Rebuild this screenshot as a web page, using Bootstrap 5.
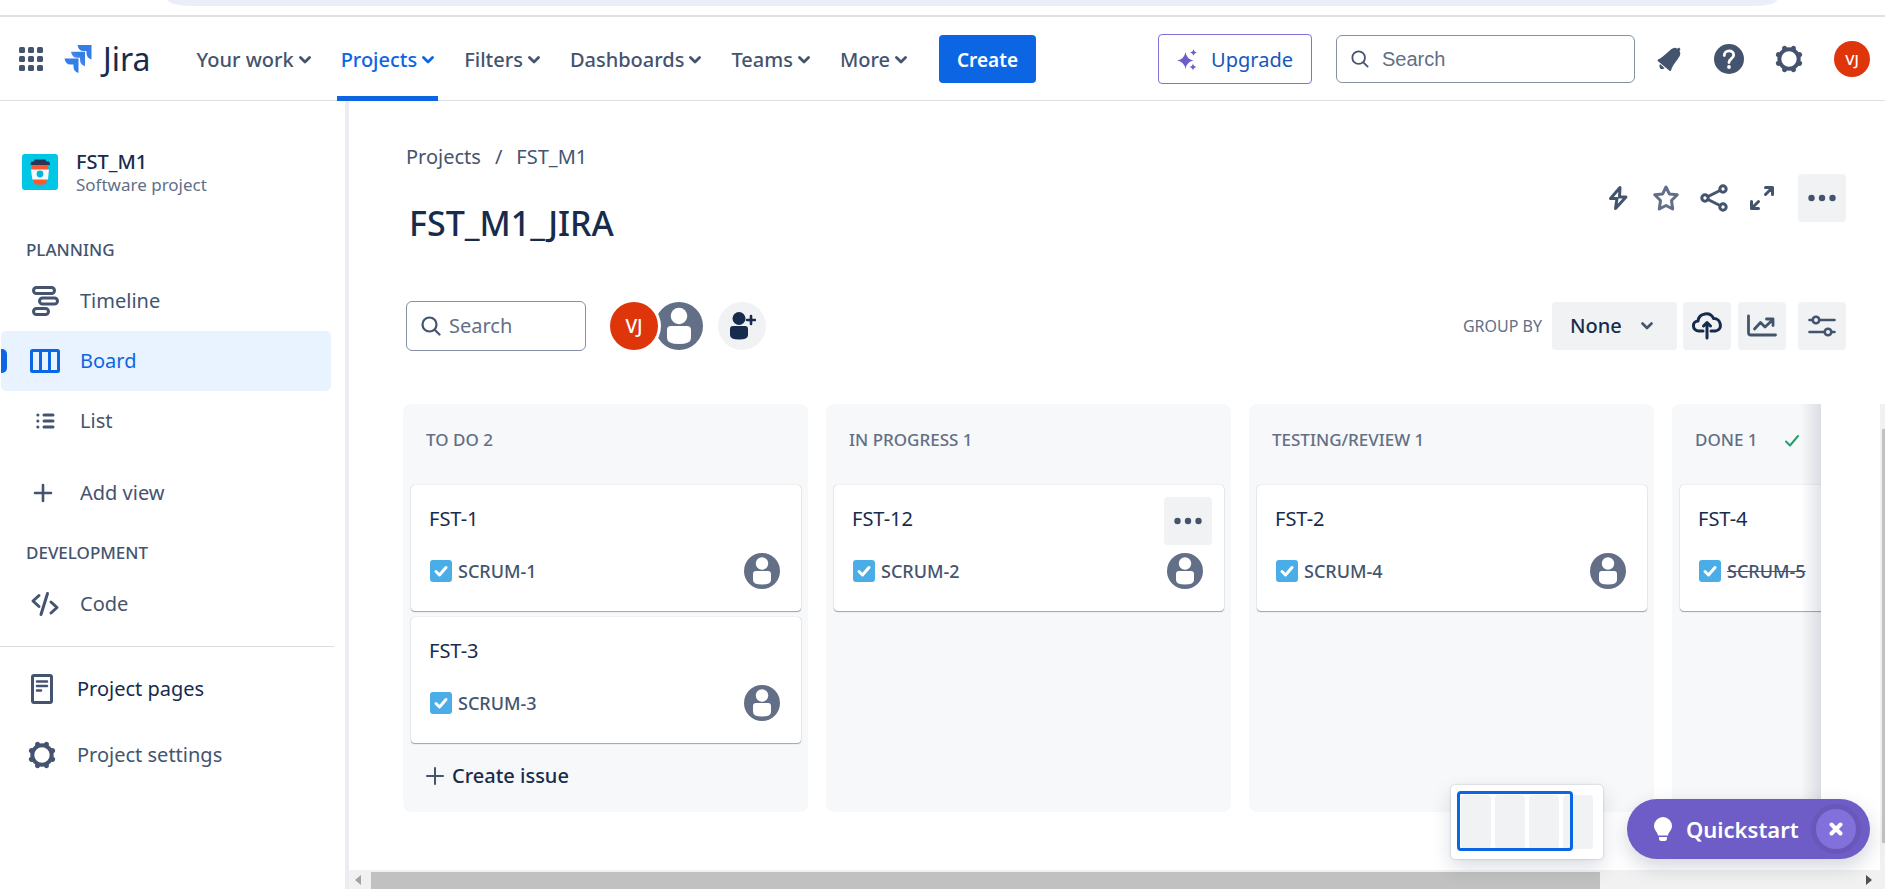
<!DOCTYPE html>
<html lang="en">
<head>
<meta charset="utf-8">
<meta name="viewport" content="width=device-width, initial-scale=1">
<title>FST_M1_JIRA - Board</title>
<link href="https://cdn.jsdelivr.net/npm/bootstrap@5.3.0/dist/css/bootstrap.min.css" rel="stylesheet">
<style>
  :root { --ink:#172b4d; --slate:#44546f; --muted:#626f86; --blue:#0c66e4; --soft:#f1f2f4; --line:#dcdfe4; }
  body { font-family:"Noto Sans","Open Sans",sans-serif; font-size:20px; line-height:30px; color:var(--ink); height:100vh; overflow:hidden; }
  a { color:inherit; text-decoration:none; }
  svg { display:block; flex:none; }
  .ico { fill:none; stroke:currentColor; stroke-linecap:round; stroke-linejoin:round; }
  .slate { color:var(--slate); }

  .browser-strip { height:17px; border-bottom:2px solid #e0e2e2; padding:0 108px 0 168px; }
  .browser-strip div { height:6px; background:#ebeef8; border-radius:0 0 24px 24px / 0 0 6px 6px; }

  .topbar { height:84px; border-bottom:1px solid var(--line); padding:0 15px 0 19px; color:var(--slate); }
  .wordmark { font-size:32px; line-height:40px; color:var(--ink); }
  .topnav .nav-link { display:flex; align-items:center; gap:5px; height:84px; padding:3px 4px 0; color:var(--slate); font-weight:500; }
  .topnav .nav-link.active { color:var(--blue); box-shadow:inset 0 -5px var(--blue); }
  .topnav { gap:22px; margin-left:42px; }
  .btn-create { height:48px; margin-left:6px; padding:4px 18px 0; border:0; border-radius:4px; background:var(--blue); color:#fff; font-size:19px; font-weight:600; }
  .btn-create:hover { background:#0055cc; color:#fff; }
  .btn-upgrade { height:50px; padding:3px 18px 0; border:1px solid #8270db; border-radius:4px; color:#1558bc; font-size:20px; }
  .find { border:1px solid #8590a2; border-radius:6px; padding:0 14px; }
  .find input { border:0; outline:0; width:100%; min-width:0; background:transparent; color:var(--ink); padding:0; }
  .find input::placeholder { color:var(--muted); opacity:1; }
  .find-top { width:299px; height:48px; }
  .find-top input { font-family:"Liberation Sans",Arial,sans-serif; font-size:20px; }
  .find-board { width:180px; height:50px; }
  .face { border-radius:50%; background:#de350b; color:#fff; display:flex; align-items:center; justify-content:center; font-weight:500; }
  .face-sm { width:36px; height:36px; font-size:15px; }
  .face-lg { width:48px; height:48px; font-size:19px; position:relative; z-index:1; box-shadow:0 0 0 3px #fff; }
  .plain { border:0; background:none; padding:0; color:inherit; font-weight:inherit; }

  .sidebar { width:345px; flex:none; padding-top:49px; color:var(--slate); }
  .splitter { width:4px; flex:none; background:#ecedf2; }
  .project { padding-left:22px; gap:18px; }
  .project-name { font-weight:500; line-height:24px; color:var(--ink); }
  .project-kind { font-size:17px; line-height:22px; color:var(--muted); }
  .group-title { font-size:17px; line-height:24px; font-weight:500; margin:0; padding-left:26px; }
  .side-link { height:60px; display:flex; align-items:center; padding-left:29px; margin:0 14px 0 1px; border-radius:5px; position:relative; }
  .side-link svg { width:32px; margin-right:18px; }
  .side-link.current { background:#e9f2ff; color:var(--blue); }
  .side-link.current::before { content:""; position:absolute; left:0; top:18px; width:6px; height:24px; background:var(--blue); border-radius:0 5px 5px 0; }
  .side-foot { margin:12px 11px 0 0; border-top:1px solid #dcdcdc; padding-top:9px; }
  .side-foot .side-link { height:66px; padding-left:26px; }

  .page-head { padding:41px 39px 5px 57px; }
  .crumb { gap:14px; color:var(--slate); }
  .board-title { font-size:34px; line-height:52px; font-weight:500; margin:25px 0 0 3px; }
  .square { width:48px; height:48px; border:0; border-radius:4px; background:var(--soft); color:var(--slate); display:flex; align-items:center; justify-content:center; padding:0; }
  .tools { padding:47px 39px 0 57px; }
  .group-label { font-size:16px; color:var(--muted); margin-right:10px; }
  .group-pick { width:125px; height:48px; border:0; border-radius:4px; font-size:20px; font-weight:500; color:var(--ink); padding:0 0 0 18px; background-color:var(--soft);
    background-image:url("data:image/svg+xml,%3Csvg xmlns='http://www.w3.org/2000/svg' viewBox='0 0 12 8'%3E%3Cpath d='M1.5 1.5 6 6l4.500-4.500' fill='none' stroke='%2344546f' stroke-width='2.600' stroke-linecap='round' stroke-linejoin='round'/%3E%3C/svg%3E"); background-size:12px 8px; background-position:right 24px center; }

  .board-area { margin-top:53px; padding-left:54px; min-height:0; }
  .lanes { gap:18px; overflow:hidden; position:relative; margin-right:64px; }
  .lanes::after { content:""; position:absolute; right:0; top:0; width:20px; height:100%; background:linear-gradient(to left,rgba(9,30,66,.12),transparent); }
  .lane { width:405px; min-height:408px; flex:none; background:#f7f8f9; border-radius:8px; padding:0 7px 8px 8px; }
  .lane h2 { font-size:17px; line-height:24px; font-weight:500; color:var(--muted); margin:0; padding:24px 0 0 15px; height:81px; }
  .issue { background:#fff; border-radius:4px; box-shadow:0 1px 1px rgba(9,30,66,.25),0 0 1px rgba(9,30,66,.31), 0 1px 1px rgba(9,30,66,.15); height:126px; margin-bottom:6px; padding:19px 21px 0 18px; position:relative; }
  .issue-row { margin:19px 0 0 1px; gap:6px; }
  .issue-key { font-size:18px; line-height:24px; font-weight:500; color:var(--slate); }
  .issue .square { position:absolute; right:12px; top:12px; }
  .new-issue { height:54px; padding-left:15px; font-weight:500; gap:8px; }

  .vbar { width:5px; background:#f1f1f1; padding:25px 0 0 2px; position:absolute; right:0; top:0; bottom:0; }
  .vbar div { height:414px; max-height:95%; background:#c1c1c1; }
  .hbar { height:19px; background:#f1f1f1; padding-left:6px; padding-right:13px; }
  .hbar .thumb { width:81%; height:17px; background:#c1c1c1; margin:2px auto 0 10px; }

  .minimap { right:282px; bottom:30px; width:152px; height:74px; background:#fff; border-radius:4px; padding:10px; gap:4px; box-shadow:0 0 2px rgba(9,30,66,.3),0 8px 20px rgba(9,30,66,.15); }
  .minimap i { width:30px; background:#f1f2f4; border-radius:4px; }
  .minimap b { position:absolute; left:6px; top:6px; width:116px; height:60px; border:3px solid var(--blue); border-radius:4px; }
  .quick { right:15px; bottom:30px; width:243px; height:60px; background:#6e5dc6; color:#fff; border-radius:30px; padding:0 9px 0 27px; font-size:22px; font-weight:600; box-shadow:0 8px 20px rgba(9,30,66,.18); }
  .quick-close { width:50px; height:50px; border:5px solid #6a57ba; border-radius:50%; background:#8270db; color:#fff; display:flex; align-items:center; justify-content:center; padding:0; }
</style>
</head>
<body class="d-flex flex-column bg-white">
<svg width="0" height="0" class="position-absolute" aria-hidden="true">
  <symbol id="chev" viewBox="0 0 12 8"><path d="M1.500 1.500 6 6l4.500-4.500" stroke-width="2.800"/></symbol>
  <symbol id="glass" viewBox="0 0 20 20"><circle cx="8.500" cy="8.500" r="7"/><path d="m14 14 4.500 4.500"/></symbol>
  <symbol id="dots" viewBox="0 0 28 8"><g fill="currentColor" stroke="none"><circle cx="3.500" cy="4" r="3.200"/><circle cx="14" cy="4" r="3.200"/><circle cx="24.500" cy="4" r="3.200"/></g></symbol>
  <symbol id="person" viewBox="0 0 36 36"><circle cx="18" cy="18" r="18" fill="#626f86"/><circle cx="18" cy="10.500" r="6.200" fill="#fff"/><path d="M9 21q0-3 3-3h12q3 0 3 3v6q0 4.500-9 4.500T9 27z" fill="#fff"/></symbol>
  <symbol id="task" viewBox="0 0 22 22"><rect width="22" height="22" rx="3" fill="#4bade8"/><path d="m6 11.500 3.500 3.500L16 7.500" fill="none" stroke="#fff" stroke-width="3" stroke-linecap="round" stroke-linejoin="round"/></symbol>
  <symbol id="gear" viewBox="0 0 28 28"><g fill="none" stroke="currentColor"><circle cx="14" cy="14" r="9.700" stroke-width="4"/><g stroke-width="5" stroke-linecap="round"><path d="M18.200 3.900l.2-.5M24.100 9.800l.5-.2M24.100 18.200l.5.2M18.200 24.100l.2.500M9.800 24.100l-.2.500M3.900 18.200l-.5.2M3.900 9.800l-.5-.2M9.800 3.900l-.2-.5"/></g></g></symbol>
</svg>

<div class="browser-strip"><div></div></div>

<header class="topbar d-flex align-items-center">
  <button class="plain" aria-label="Switch to">
    <svg width="24" height="24" viewBox="0 0 24 24" fill="currentColor"><rect width="6" height="6" rx="1.500"/><rect x="9" width="6" height="6" rx="1.500"/><rect x="18" width="6" height="6" rx="1.500"/><rect y="9" width="6" height="6" rx="1.500"/><rect x="9" y="9" width="6" height="6" rx="1.500"/><rect x="18" y="9" width="6" height="6" rx="1.500"/><rect y="18" width="6" height="6" rx="1.500"/><rect x="9" y="18" width="6" height="6" rx="1.500"/><rect x="18" y="18" width="6" height="6" rx="1.500"/></svg>
  </button>
  <a href="#" class="d-flex align-items-center" style="gap:11px;margin-left:21px">
    <svg width="28" height="28" viewBox="0 0 27 28"><defs><linearGradient id="jg" x1="1" y1="0" x2="0" y2="1"><stop offset=".3" stop-color="#357de8"/><stop offset="1" stop-color="#6da2f2"/></linearGradient></defs><path fill="#357de8" d="M13 0h14v14.500q-5-1.500-5-6.500V6h-3q-5 0-6-6z"/><path fill="url(#jg)" d="M6.500 6.800h14v14.500q-5-1.500-5-6.500v-2h-3q-5 0-6-6z"/><path fill="#357de8" d="M0 13.500h14V28q-5-1.500-5-6.500v-2H6q-5 0-6-6z"/></svg>
    <span class="wordmark">Jira</span>
  </a>
  <nav class="topnav nav flex-nowrap">
    <a class="nav-link" href="#">Your work <svg class="ico" width="12" height="8"><use href="#chev"/></svg></a>
    <a class="nav-link active" href="#">Projects <svg class="ico" width="12" height="8"><use href="#chev"/></svg></a>
    <a class="nav-link" href="#">Filters <svg class="ico" width="12" height="8"><use href="#chev"/></svg></a>
    <a class="nav-link" href="#">Dashboards <svg class="ico" width="12" height="8"><use href="#chev"/></svg></a>
    <a class="nav-link" href="#">Teams <svg class="ico" width="12" height="8"><use href="#chev"/></svg></a>
    <a class="nav-link" href="#">More <svg class="ico" width="12" height="8"><use href="#chev"/></svg></a>
    <button class="btn btn-create align-self-center">Create</button>
  </nav>
  <div class="d-flex align-items-center ms-auto">
    <button class="btn btn-upgrade d-flex align-items-center">
      <svg width="20" height="22" viewBox="0 0 20 22" fill="#6e5dc6"><path d="M8.500 3q1 7 8 8.500-7 1.500-8 8.500-1-7-8.500-8.500Q7.500 10 8.500 3zM16.500 0q.5 3 3.500 3.500-3 .5-3.500 3.500-.5-3-3.500-3.500 3-.5 3.500-3.500zM16 14.500q.5 3 3.500 3.500-3 .5-3.500 3.500-.5-3-3.500-3.500 3-.5 3.500-3.500z"/></svg>
      <span style="padding-left:14px">Upgrade</span>
    </button>
    <label class="find find-top d-flex align-items-center ms-4">
      <svg class="ico" width="18" height="18" stroke-width="2" style="margin-right:13px"><use href="#glass"/></svg>
      <input type="text" placeholder="Search" aria-label="Search">
    </label>
    <div class="d-flex align-items-center" style="gap:31px;margin-left:20px">
      <button class="plain" aria-label="Notifications"><svg width="28" height="28" viewBox="0 0 28 28" fill="currentColor"><path d="M3 14.500C9 12 13 6 17.500 3.500c2-1 3.500-.8 4.500.2l2-1.200 1.500 1.700-1 1.800c1 1.500 1 3.500.2 5C22.500 15 17.500 20 16 25.500q-.7 1-1.500.2L2.800 16q-.6-.9.200-1.500zM5 19l4.500 4q-2.500 2.200-4.500.3-1.500-2 0-4.300z"/></svg></button>
      <button class="plain" aria-label="Help"><svg width="30" height="30" viewBox="0 0 30 30"><circle cx="15" cy="15" r="15" fill="currentColor"/><path d="M10.300 11.500c0-6 9.400-6 9.400-.5 0 3.800-4.700 3.500-4.700 7.500" fill="none" stroke="#fff" stroke-width="2.800" stroke-linecap="round"/><circle cx="15" cy="23" r="1.900" fill="#fff"/></svg></button>
      <button class="plain" aria-label="Settings"><svg width="28" height="28"><use href="#gear"/></svg></button>
      <button class="plain" aria-label="Your profile"><span class="face face-sm">VJ</span></button>
    </div>
  </div>
</header>

<div class="d-flex flex-fill" style="min-height:0">
  <aside class="sidebar">
    <div class="project d-flex">
      <svg class="mt-1" width="36" height="36" viewBox="0 0 36 36"><rect width="36" height="36" rx="3" fill="#00c7e5"/><path d="M12.500 5.500h11l1 2h2.500l1 2.500v1H8.500v-1l1-2.500H12z" fill="#253858"/><path d="M9.800 11h16.500L24.200 30q-6.200 1.500-12.200 0z" fill="#ff5630"/><path d="M9 15.500h18l-1 10H10.300z" fill="#f4f9fb"/><circle cx="18" cy="20" r="3.400" fill="#00b8d9"/></svg>
      <div><div class="project-name">FST_M1</div><div class="project-kind">Software project</div></div>
    </div>
    <h2 class="group-title" style="margin-top:42px">PLANNING</h2>
    <nav style="margin-top:9px">
      <a class="side-link" href="#"><svg class="ico" width="32" height="32" viewBox="0 0 32 32" stroke-width="3"><rect x="3.500" y="2.500" width="21" height="6" rx="3"/><rect x="9.500" y="13" width="18" height="6" rx="3"/><rect x="3.500" y="23.500" width="15" height="6" rx="3"/></svg>Timeline</a>
      <a class="side-link current" href="#" aria-current="page"><svg class="ico" width="32" height="24" viewBox="0 0 32 24" stroke-width="3"><rect x="1.500" y="1.500" width="27" height="21" rx="1"/><path d="M10.500 2v20M19.500 2v20"/></svg>Board</a>
      <a class="side-link" href="#"><svg class="ico" width="32" height="20" viewBox="0 0 32 20" stroke-width="3"><path d="M14 4h9M14 10h9M14 16h9M7.800 4h.1M7.800 10h.1M7.800 16h.1"/></svg>List</a>
      <a class="side-link" href="#" style="margin-top:12px"><svg class="ico" width="32" height="20" viewBox="0 0 32 20" stroke-width="2.600"><path d="M5 10h16M13 2v16"/></svg>Add view</a>
    </nav>
    <h2 class="group-title" style="margin-top:18px">DEVELOPMENT</h2>
    <nav style="margin-top:9px">
      <a class="side-link" href="#"><svg class="ico" width="32" height="26" viewBox="0 0 32 26" stroke-width="3"><path d="M9 4.500 3 10l6 5.500M17.500 2.500 11 23.500M21 11l6 5.500-6 5.500"/></svg>Code</a>
    </nav>
    <div class="side-foot">
      <a class="side-link" href="#" style="color:var(--ink)"><svg class="ico slate" width="32" height="30" viewBox="0 0 32 30" stroke-width="3"><rect x="5.500" y="1.500" width="19" height="27" rx="1.500"/><path d="M10 7.500h10M10 12h10M10 16.500h4" stroke-width="2.600"/></svg>Project pages</a>
      <a class="side-link" href="#"><svg width="32" height="30" viewBox="-1 -1 32 30"><use href="#gear" width="28" height="28"/></svg>Project settings</a>
    </div>
  </aside>
  <div class="splitter"></div>

  <main class="d-flex flex-column flex-fill" style="min-width:0">
    <div class="page-head d-flex justify-content-between align-items-center">
      <div>
        <div class="crumb d-flex"><a href="#">Projects</a><span>/</span><a href="#">FST_M1</a></div>
        <h1 class="board-title">FST_M1_JIRA</h1>
      </div>
      <div class="d-flex align-items-center slate pt-1" style="gap:20px">
        <button class="plain" aria-label="Automation"><svg class="ico" width="28" height="28" viewBox="0 0 28 28" stroke-width="3"><path d="M16 3.500 6.500 14.500H13L11.500 24.500 22 13h-6.500z"/></svg></button>
        <button class="plain" aria-label="Star" style="color:var(--muted)"><svg class="ico" width="28" height="28" viewBox="0 0 28 28" stroke-width="3"><path d="M14 3l3.300 6.900 8 .9-5.800 5.700 1.200 8.500L14 21.500 7.300 25l1.200-8.500-5.800-5.700 8-.9z"/></svg></button>
        <button class="plain" aria-label="Share"><svg class="ico" width="28" height="28" viewBox="0 0 28 28" stroke-width="3"><circle cx="5" cy="14" r="3.200"/><circle cx="23" cy="5" r="3.200"/><circle cx="23" cy="23" r="3.200"/><path d="m8 12.500 12-6M8 15.500l12 6"/></svg></button>
        <button class="plain" aria-label="Full screen"><svg class="ico" width="28" height="28" viewBox="0 0 28 28" stroke-width="3"><path d="M17.500 10.500 24 4M17.500 3.500h7v7M10.500 17.500 4 24M3.500 17.500v7h7"/></svg></button>
        <button class="square" aria-label="More actions" style="margin-left:2px"><svg width="28" height="8"><use href="#dots"/></svg></button>
      </div>
    </div>

    <div class="tools d-flex align-items-center">
      <label class="find find-board d-flex align-items-center">
        <svg class="ico me-2 slate" width="20" height="20" stroke-width="2.200"><use href="#glass"/></svg>
        <input type="text" placeholder="Search" aria-label="Search board">
      </label>
      <button class="plain ms-4" aria-label="VJ"><span class="face face-lg">VJ</span></button>
      <button class="plain" aria-label="Unassigned" style="margin-left:-3px"><svg width="48" height="48"><use href="#person"/></svg></button>
      <button class="square rounded-circle" aria-label="Add people" style="color:var(--ink);margin-left:15px"><svg width="28" height="30" viewBox="0 0 28 30" fill="currentColor"><circle cx="11" cy="7.500" r="6.500"/><path d="M2 18q0-3 3-3h12q3 0 3 3v6q0 4.500-9 4.500T2 24z"/><path d="M23 5v8M19 9h8" stroke="currentColor" stroke-width="2.600" stroke-linecap="round"/></svg></button>
      <div class="d-flex align-items-center ms-auto">
        <label class="group-label" for="groupBy">GROUP BY</label>
        <select class="form-select group-pick" id="groupBy"><option>None</option></select>
        <button class="square" aria-label="Import" style="margin-left:6px;color:var(--ink)"><svg class="ico" width="32" height="30" viewBox="0 0 32 30" stroke-width="3"><path d="M12 20H8c-7 0-7.500-9.500-1-10C8 1.500 19.500.5 22.500 7.500c7.500-.5 10 11.500 2 12.500H20M16 27V12M12.500 15 16 11.500l3.500 3.500"/></svg></button>
        <button class="square" aria-label="Insights" style="margin-left:7px"><svg class="ico" width="30" height="24" viewBox="0 0 30 24" stroke-width="2.800"><path d="M1.500 2v16.500q0 2.500 2.500 2.500h24.500M7.500 15l6-6.500 4.500 4.500 8-7.500M19.500 5H26v6.500"/></svg></button>
        <button class="square" aria-label="View settings" style="margin-left:12px"><svg class="ico" width="28" height="24" viewBox="0 0 28 24" stroke-width="2.600"><path d="M1.500 6H4M12 6h14.500M1.500 18H16M24 18h2.500"/><circle cx="8" cy="6" r="3.300"/><circle cx="20" cy="18" r="3.300"/></svg></button>
      </div>
    </div>

    <div class="board-area flex-fill position-relative">
      <div class="lanes d-flex">
        <section class="lane">
          <h2>TO DO 2</h2>
          <article class="issue">FST-1
            <div class="issue-row d-flex align-items-center"><svg width="22" height="22"><use href="#task"/></svg><a class="issue-key" href="#">SCRUM-1</a><svg class="ms-auto" width="36" height="36"><use href="#person"/></svg></div>
          </article>
          <article class="issue">FST-3
            <div class="issue-row d-flex align-items-center"><svg width="22" height="22"><use href="#task"/></svg><a class="issue-key" href="#">SCRUM-3</a><svg class="ms-auto" width="36" height="36"><use href="#person"/></svg></div>
          </article>
          <button class="plain new-issue d-flex align-items-center"><svg class="ico slate" width="18" height="18" viewBox="0 0 18 18" stroke-width="2"><path d="M1 9h16M9 1v16"/></svg>Create issue</button>
        </section>
        <section class="lane">
          <h2>IN PROGRESS 1</h2>
          <article class="issue">FST-12
            <button class="square" aria-label="Issue actions"><svg width="28" height="8"><use href="#dots"/></svg></button>
            <div class="issue-row d-flex align-items-center"><svg width="22" height="22"><use href="#task"/></svg><a class="issue-key" href="#">SCRUM-2</a><svg class="ms-auto" width="36" height="36"><use href="#person"/></svg></div>
          </article>
        </section>
        <section class="lane">
          <h2>TESTING/REVIEW 1</h2>
          <article class="issue">FST-2
            <div class="issue-row d-flex align-items-center"><svg width="22" height="22"><use href="#task"/></svg><a class="issue-key" href="#">SCRUM-4</a><svg class="ms-auto" width="36" height="36"><use href="#person"/></svg></div>
          </article>
        </section>
        <section class="lane">
          <h2 class="d-flex">DONE 1 <svg class="ico" width="16" height="24" viewBox="0 0 16 24" stroke-width="2" style="color:#22a06b;margin-left:26px"><path d="m2 13.500 4 4L14 8"/></svg></h2>
          <article class="issue">FST-4
            <div class="issue-row d-flex align-items-center"><svg width="22" height="22"><use href="#task"/></svg><a class="issue-key text-decoration-line-through" href="#">SCRUM-5</a><svg class="ms-auto" width="36" height="36"><use href="#person"/></svg></div>
          </article>
        </section>
      </div>
      <div class="vbar"><div></div></div>
    </div>
    <div class="hbar d-flex align-items-center">
      <svg width="6" height="10" viewBox="0 0 6 10"><path d="M6 0v10L0 5z" fill="#a3a3a3"/></svg>
      <div class="thumb"></div>
      <svg width="6" height="10" viewBox="0 0 6 10"><path d="M0 0v10l6-5z" fill="#505050"/></svg>
    </div>
  </main>
</div>

<div class="minimap position-absolute d-flex" aria-hidden="true"><i></i><i></i><i></i><i></i><b></b></div>
<div class="quick position-absolute d-flex align-items-center">
  <svg width="18" height="24" viewBox="0 0 18 24" fill="#fff"><path d="M9 0a9 9 0 0 1 9 9c0 4-3.500 6-4 9.500H4C3.500 15 0 13 0 9a9 9 0 0 1 9-9zM5 20h8v2q-.5 2-2 2H7q-1.500 0-2-2z"/></svg>
  <button class="plain" style="margin-left:14px">Quickstart</button>
  <button class="quick-close ms-auto" aria-label="Dismiss"><svg class="ico" width="14" height="14" viewBox="0 0 14 14" stroke-width="4"><path d="m2.500 2.500 9 9M11.500 2.500l-9 9"/></svg></button>
</div>
<script src="https://cdn.jsdelivr.net/npm/bootstrap@5.3.0/dist/js/bootstrap.bundle.min.js"></script>
</body>
</html>
